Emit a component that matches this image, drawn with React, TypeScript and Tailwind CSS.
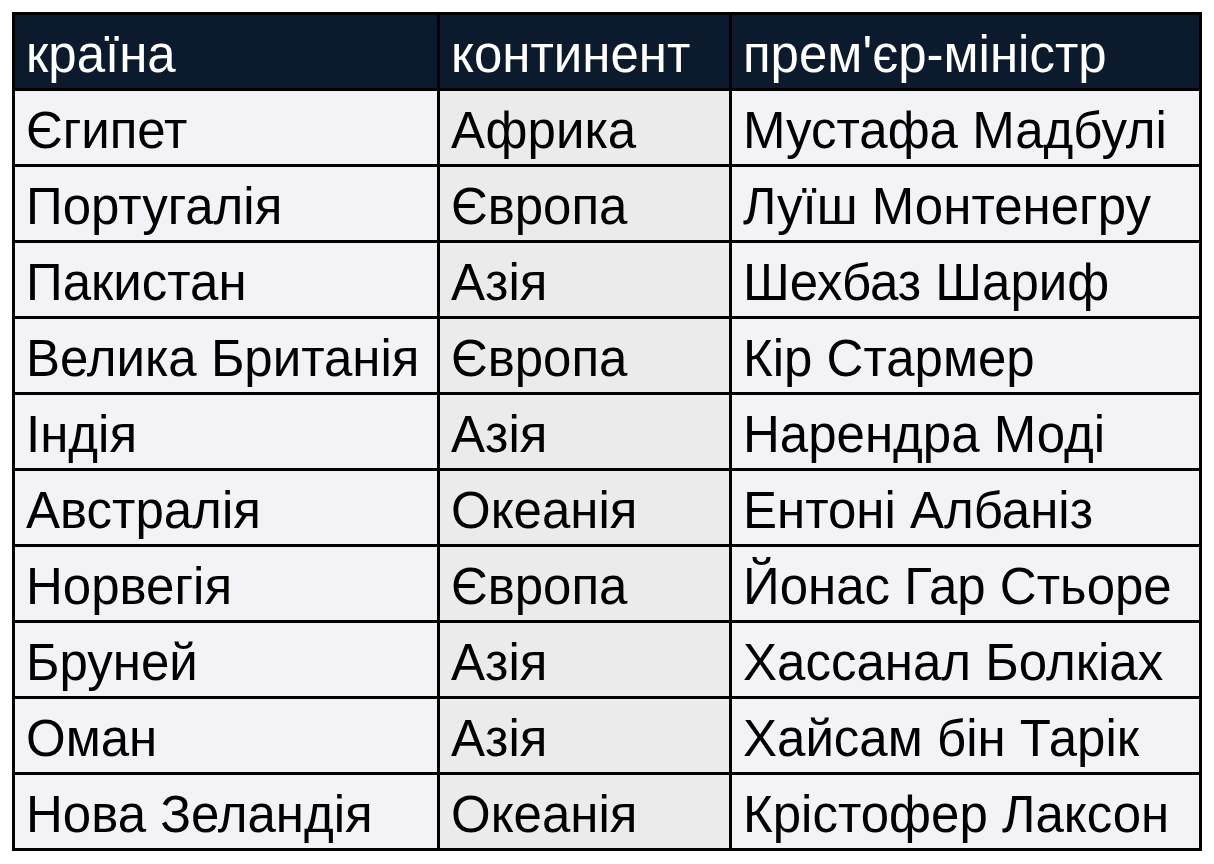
import React from "react";

const rows: [string, string, string][] = [
  ["Єгипет", "Африка", "Мустафа Мадбулі"],
  ["Португалія", "Європа", "Луїш Монтенегру"],
  ["Пакистан", "Азія", "Шехбаз Шариф"],
  ["Велика Британія", "Європа", "Кір Стармер"],
  ["Індія", "Азія", "Нарендра Моді"],
  ["Австралія", "Океанія", "Ентоні Албаніз"],
  ["Норвегія", "Європа", "Йонас Гар Стьоре"],
  ["Бруней", "Азія", "Хассанал Болкіах"],
  ["Оман", "Азія", "Хайсам бін Тарік"],
  ["Нова Зеландія", "Океанія", "Крістофер Лаксон"],
];

export default function App() {
  return (
    <div
      className="w-[1214px] h-[864px] bg-white pt-[12px] pl-[12px]"
      style={{ fontFamily: '"Liberation Sans", Arial, sans-serif' }}
    >
      <table className="border-collapse border-[3px] border-black text-[51px] leading-none">
        <thead>
          <tr className="h-[76px] bg-[#0b1a2c] text-white">
            <th className="w-[425px] border-[3px] border-black px-[11px] pt-[5px] text-left font-normal">країна</th>
            <th className="w-[292px] border-[3px] border-black px-[11px] pt-[5px] text-left font-normal">континент</th>
            <th className="w-[470px] border-[3px] border-black px-[11px] pt-[5px] text-left font-normal">прем'єр-міністр</th>
          </tr>
        </thead>
        <tbody>
          {rows.map((r, i) => (
            <tr key={i} className="h-[76px] text-black">
              <td className="border-[3px] border-black bg-[#f3f3f7] px-[11px] pt-[5px] whitespace-nowrap">{r[0]}</td>
              <td className="border-[3px] border-black bg-[#ebebeb] px-[11px] pt-[5px] whitespace-nowrap">{r[1]}</td>
              <td className="border-[3px] border-black bg-[#f3f3f7] px-[11px] pt-[5px] whitespace-nowrap">{r[2]}</td>
            </tr>
          ))}
        </tbody>
      </table>
    </div>
  );
}
